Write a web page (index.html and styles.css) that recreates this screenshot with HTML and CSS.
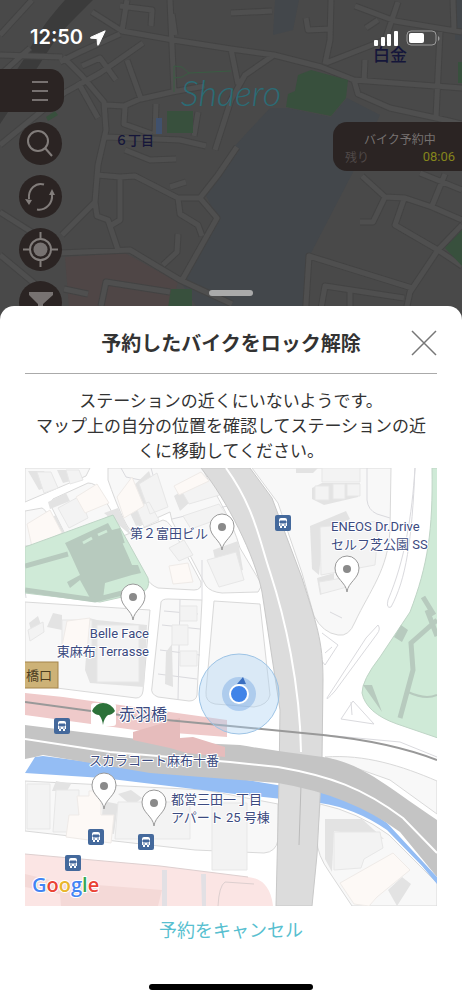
FILE: index.html
```html
<!DOCTYPE html>
<html lang="ja">
<head>
    <meta charset="UTF-8">
    <meta name="viewport" content="width=device-width, initial-scale=1.0">
    <title>予約したバイクをロック解除</title>
    <link rel="stylesheet" href="styles.css">
</head>
<body>

<div class="screen">
    <div class="backdrop">
        <!-- Dimmed map behind the sheet -->
        <svg class="backdrop-map" viewBox="0 0 462 320" preserveAspectRatio="xMidYMin slice" aria-hidden="true">
            <rect width="462" height="320" fill="#494949"/>
            <path class="dim-water" d="M270 108L288 108 331 117 347 98 380 115 352 174 310 255 302 320H205L182 284 218 219 204 192 231 150Z"/>
            <path class="dim-water" d="M275 0h24l-6 30-20 5zM455 0h7v40h-7z"/>
            <path fill="#4f4646" d="M65 257L125 253 178 282 166 320H70Z"/>
            <path fill="#3b3b3b" d="M65 0H93C75 18 61 31 52 45L28 82 0 124V95L26 56C38 32 49 18 65 0Z"/>
            <g class="dim-edges">
                <path id="lanes" d="M127 0L122 31 173 40 231 49 274 55 321 67 354 80 462 88M170 0L174 92M172 14L175 35M122 31L92 12M120 6L152 10 151 26M143 43L100 73 64 93 0 145M60 62L80 52 120 34M63 57L82 76 104 102 106 130 98 165 95 202 62 235M82 66L100 58 116 80M78 82L98 118M127 60L141 99 172 92 205 86M106 105L124 106 140 99M125 107L124 124 152 134M156 104L155 134M106 137L180 140 206 146M194 136L198 112M274 55L245 75 231 100 215 150M231 49L238 84M331 0L330 40 325 64M231 13L272 11M306 18L308 30 330 29M326 63L385 40 398 2M355 6L395 21 462 32M366 28L378 20M453 0L454 30M440 32L436 118M365 60L364 82M354 80L358 94 390 108 436 118 462 124M0 212L60 250M0 255L35 284M60 253L130 250 180 280 232 304M97 175L120 177 135 176 178 198 200 198 217 218 181 282M120 177L120 220 110 226M95 202L97 216 108 220 118 250M178 198L180 214 198 225 202 236M178 234L177 252 163 265M200 198L218 175 237 147M125 150L150 160 176 159M170 187L186 182M362 176L385 197 373 222 360 222M385 197L405 198 432 207 462 220M404 199L395 225 438 250 462 266M445 174L432 206M420 173L462 190M462 225L438 250 410 292 404 320M305 320L309 256 412 288M319 320L325 286 404 298M350 290L350 306M0 55L62 57M0 35L32 0M0 75L30 48M64 289L88 294M101 306L106 282 170 292"/>
            </g>
            <use class="dim-roads" href="#lanes"/>
            <path class="dim-green" d="M298 75L311 70 348 80 346 98 331 116 286 107 288 94 295 91ZM167 111h26v22h-26zM171 289h21v31h-26zM462 230L445 248 462 266zM458 62h4v21h-4zM46 117l9-6 3 4-10 6z"/>
            <path fill="#40516d" d="M156 118h6v16h-6z"/>
            <path d="M174 92V66l8 1 7 6 42-2M174 78l8-1 7-4" fill="none" stroke="#3a5c43"/>
            <g class="dim-labels">
                <text x="115" y="145" font-size="13">６丁目</text>
                <text x="373" y="61" font-size="17">白金</text>
            </g>
        </svg>

        <div class="status-bar">
            <div class="status-group">
                <time class="clock">12:50</time>
                <svg width="16" height="16" viewBox="0 0 16 16" aria-hidden="true"><path d="M15.2.8L.8 7.2c-.7.4-.5 1 .3 1l6 .4.4 6c0 .8.7 1 1 .3z" fill="#fff" stroke="#fff" stroke-linejoin="round"/></svg>
            </div>
            <div class="status-group">
                <svg width="25" height="16" viewBox="0 0 25 16" fill="#fff" aria-hidden="true"><rect y="10" width="4" height="6" rx="1"/><rect x="7" y="7" width="4" height="9" rx="1"/><rect x="13" y="4" width="4" height="12" rx="1"/><rect x="20" y="1" width="4" height="15" rx="1"/></svg>
                <svg width="34" height="16" viewBox="0 0 34 16" aria-hidden="true"><rect x="1" y="1" width="29" height="14" rx="4" fill="none" stroke="#9a9a9a"/><rect x="3" y="3" width="15" height="10" rx="2" fill="#fff"/><path d="M32 6c2 1 2 4 0 5z" fill="#9a9a9a"/></svg>
            </div>
        </div>

        <div class="brand">Shaero</div>

        <div class="map-controls">
            <button class="menu-button" aria-label="メニュー">
                <svg width="16" height="22" viewBox="0 0 16 22" stroke="#777170" stroke-width="2"><path d="M0 2h16M0 11h16M0 20h16"/></svg>
            </button>
            <button class="round-button" aria-label="検索">
                <svg viewBox="0 0 43 43"><circle cx="19" cy="19" r="10"/><path d="M26 26l7 8"/></svg>
            </button>
            <button class="round-button" aria-label="更新">
                <svg viewBox="0 0 43 43"><path d="M25 9.500C17 7 9 14 10 24M18 34.500C27 36 34 28 33 19"/><path d="M6 24l7 1-3 5zM30 20l3-6 3 6z" fill="#827d7b" stroke="none"/></svg>
            </button>
            <button class="round-button" aria-label="現在地">
                <svg viewBox="0 0 43 43"><circle cx="21.500" cy="21.500" r="10.500"/><circle cx="21.500" cy="21.500" r="7" fill="#777271" stroke="none"/><path d="M21.500 4v7M21.500 32v7M4 21.500h7M32 21.500h7"/></svg>
            </button>
            <button class="round-button" aria-label="絞り込み">
                <svg viewBox="0 0 43 43"><path d="M10 11h24v3L24 23v10l-5-3v-7L10 14z" fill="#777271" stroke="none"/></svg>
            </button>
        </div>

        <div class="reservation">
            <div class="reservation-title">バイク予約中</div>
            <div class="reservation-row"><span>残り</span><span class="countdown">08:06</span></div>
        </div>
        <div class="drag-handle"></div>
    </div>

    <main class="sheet">
        <header class="sheet-header">
            <h1>予約したバイクをロック解除</h1>
            <button class="close-button" aria-label="閉じる">
                <svg width="26" height="26" viewBox="0 0 26 26" stroke="#777" stroke-width="1.500"><path d="M1 1l24 24M25 1L1 25"/></svg>
            </button>
        </header>

        <p class="message">ステーションの近くにいないようです。<br>マップ上の自分の位置を確認してステーションの近くに移動してください。</p>

        <svg class="map" viewBox="25 468 412 438" role="img" aria-label="現在地周辺のマップ">
            <defs>
                <g id="pin">
                    <path d="M0 23C-1 13-12 10-12-1A12 12 0 0 1 12-1C12 10 1 13 0 23Z" fill="#fff" stroke="#999"/>
                    <circle r="4" fill="#8a8a8a"/>
                </g>
                <g id="bus">
                    <rect x="-8" y="-8" width="16" height="16" rx="2" fill="#44699c"/>
                    <path d="M-4-3q0-2 2-2h4q2 0 2 2v6h-1v2h-2v-2h-2v2h-2v-2h-1z" fill="#fff"/>
                    <path d="M-3-2h6v2h-6zM-3 2h2M1 2h2" fill="#44699c" stroke="#44699c"/>
                </g>
            </defs>
            <rect x="25" y="468" width="412" height="438" fill="#fff"/>

            <!-- City blocks -->
            <g class="blocks">
                <path d="M25 468H90L86 476 25 502ZM25 511L42 508Q48 511 66 541L25 546ZM53 499L88 483Q96 483 100 491L113 514 67 538 50 504ZM108 468H202C218 499 232 520 240 548L262 585 258 592 222 593Q211 592 206 586L172 521 170 512 130 530Q122 520 108 480ZM123 536L163 520Q167 520 171 526L201 582Q202 590 194 590L158 588Q150 585 146 577Z"/>
                <path d="M25 602L150 610 143 691Q142 698 136 698L25 684ZM161 602Q162 599 168 599L202 600 197 695Q196 701 189 701L158 697Q150 694 152 687ZM214 601L260 604 270 695Q268 705 254 707L215 704Q205 702 206 692Z"/>
                <path d="M252 468H391L390 530C388 570 370 590 355 622Q349 637 338 635 323 633 314 616L302 573 278 503ZM25 781L205 790 278 804V840Q276 852 264 853L195 850 25 831ZM320 804Q358 812 389 835L437 883V906H352L330 873Q317 855 317 840ZM325 757C365 754 402 766 437 781V814L390 780Z"/>
            </g>
            <g class="outlines">
                <path d="M367 468V500Q368 510 377 514L390 518M415 468C412 515 405 560 388 600Q386 609 391 607C406 580 412 540 415 468M378 625Q381 629 377 634L335 691Q326 701 327 698L366 638Z"/>
                <path d="M322 633L338 645 325 665 318 656M325 653L332 647M353 701L374 724 341 719ZM351 702L352 715M330 612L342 618M202 600V560M180 599L178 700M162 625L200 629M160 650L200 655M164 611L198 614M158 674L197 679"/>
                <path d="M121 468L126 477 145 481M151 468L162 507M172 519L240 503M25 590L26 598M325 735L400 742 437 757"/>
            </g>

            <!-- Buildings -->
            <g class="shade">
                <path d="M28 471h16l8 14-13 5zM57 470h13l5 10-12 3zM48 502l18-9 4 8-20 8zM104 513L118 508 132 536zM130 513l16-6 8 14-18 5zM174 496l18-12 8 9-20 18zM213 550l25-9 5 29-24 8zM130 489l19-18 10 31-17 6zM46 520l10-5 9 20-8 4z"/>
                <path d="M53 613L47 627 62 630V615zM89 618L85 670 90 683 144 687 147 625 97 620zM29 623l9-7 4 12-9 9zM166 652l6-8 1 43-8-3zM296 468h22l-5 5h-17zM312 488l10-5h38l-2 14-34 8-12-6zM310 526l36-15 4 8-27 14-4 42-7-6zM317 578l17-5v14l-14 8z"/>
                <path d="M56 781l15 3-4 7h-15zM118 794l13-4 11 8-10 8zM103 801l15 3-4 30-13-2zM325 819h37l22 20-50-8-2 41-7-13zM388 890l14-13 9 7-14 22z"/>
            </g>
            <g class="roofs">
                <path d="M37 472h14l7 16-14 5zM66 470h13l4 10-13 4zM58 508l22-12 8 22-19 10zM136 507l13-5 10 18-15 7zM182 492l32-14 9 16-34 10zM139 484l18-11 11 34-18 7zM183 516l36-12 8 12-36 13zM207 560l29-8 8 28-25 7zM169 548l15-8 9 15-14 6z"/>
                <path d="M62 620h30v36H62zM97 625h42v57H97zM172 625h16v20h-16zM180 606h17v15h-17zM180 651h17v15h-17zM28 630l15-8 1 10-14 9zM322 468h38v14h-38zM315 486h14v14h-14zM333 484h12v15h-12zM347 484h13v12h-13zM320 527l59-6-4 44-54 10zM319 582l29-5-1 10-26 7z"/>
                <path d="M27 784h23v45H27zM56 790h23v42H53zM118 802h72v37h-75zM212 803h35v67h-35zM334 832h46l3 16-19 11-3 9-27 2z"/>
            </g>
            <g class="warm-roofs">
                <path d="M27 524l23-14 12 23-30 14zM76 497l21-13 12 19-24 10zM117 497l15-20 12 29-20 12zM174 486l27-14 8 9-30 14zM169 566l19-3 5 19-20 2zM67 621l23-3-3 34-26-1zM77 796h12v-5h12v24h13l-3 28-45-6 3-22h10zM340 883l53-30 17 17-33 27-8 9-15-2z"/>
            </g>
            <path d="M25 854L160 866 248 877Q270 879 273 906H25Z" fill="#fbe5e4"/>
            <path d="M25 854L160 866 248 877M254 884L225 882Q219 886 218 906" fill="none" stroke="#ddcfcf"/>
            <path d="M25 874L58 882 162 890 158 906H61L60 894 25 887Z" fill="#f4d9d7"/>
            <path d="M162 870h5v36h-5zM201 874h5v32h-4z" fill="#e2e0e4"/>

            <!-- Parks -->
            <g fill="#cfead7" stroke="#bfd5c6">
                <path d="M25 547L113 515 148 578Q151 590 140 593L100 602 25 593Z"/>
                <path d="M432 468C433 530 428 565 410 612L380 657Q362 680 362 693 366 713 397 724L438 738V468Z"/>
            </g>
            <g fill="#b7cabe">
                <path d="M65 543L108 523 112 530 120 528 132 565 138 565 141 573 132 575 105 583 103 599 90 598 80 580 70 588 67 582 80 575 70 553ZM363 685H372L382 712ZM401 625L408 630 402 642 394 637Z"/>
                <path d="M25 566L68 554M25 590L95 600 138 589M437 620L411 643 413 670 400 718M427 610L437 636M423 597L434 615" fill="none" stroke="#b7cabe" stroke-width="5"/>
                <path d="M408 692Q425 700 437 695" fill="none" stroke="#b7cabe" stroke-width="2"/>
            </g>
            <path d="M83 543l9-5M98 535l9-4M124 543l9 20M105 591l12-4M122 583l9-3" stroke="#cfead7" stroke-width="3"/>

            <!-- River, elevated roads and the station -->
            <path fill="#94bdf4" d="M43 756L120 766 235 778 320 792Q360 803 387 823L437 877V884L422 866 387 830Q355 808 320 803L235 794 103 778 25 773 35 757Z"/>
            <path fill="#dcdcdc" stroke="#c8c8c8" d="M201 468H250L272 498 302 578C316 623 323 640 323 680L322 760 317 855 312 906H276L279 780 280 710 262 592C255 556 227 500 201 468Z"/>
            <path d="M226 468C255 508 260 543 270 572 285 618 300 684 301 752" fill="none" stroke="#fff" stroke-width="2"/>
            <path d="M301 785L299 845" stroke="#bbb"/>
            <path fill="#efcaca" d="M25 693L63 697 227 720V737L135 730 25 715Z"/>
            <path fill="#c4c4c4" d="M25 725L153 741 240 745Q280 752 323 757C360 762 385 785 437 820V877L400 832Q350 795 278 783L150 773 43 755 35 757 25 759Z"/>
            <path d="M25 739L110 752 230 762 278 767C330 776 363 788 403 818L437 853" fill="none" stroke="#fff" stroke-width="2"/>
            <path fill="#e6bcbc" d="M133 732L180 718V738L193 737 225 747V757L187 753 170 748 133 740Z"/>
            <path d="M25 702L135 717 230 726 323 735Q390 742 437 760" fill="none" stroke="#999" stroke-width="2"/>
            <rect x="20" y="662" width="38" height="26" fill="#cdb277" stroke="#a4844b"/>

            <!-- Current position -->
            <circle cx="239" cy="694" r="40" fill="#a9d0f3" fill-opacity=".38" stroke="#9cc3e5"/>
            <circle cx="239" cy="694" r="17" fill="#6c9fe0" fill-opacity=".4"/>
            <path d="M237 684L243 677 246 684Z" fill="#3b6fc0"/>
            <circle cx="239" cy="694" r="9" fill="#4184e8" stroke="#fff" stroke-width="2"/>

            <rect x="91" y="703" width="25" height="23" rx="3" fill="#fff"/>
            <path d="M92 711Q96 703 103 703 111 703 115 711 112 715 108 715 104 718 103 725 102 718 99 715 95 715 92 711Z" fill="#2c7139"/>

            <use href="#pin" x="222" y="527"/>
            <use href="#pin" x="133" y="597"/>
            <use href="#pin" x="347" y="569"/>
            <use href="#pin" x="104" y="786"/>
            <use href="#pin" x="154" y="803"/>
            <use href="#bus" x="283" y="523"/>
            <use href="#bus" x="62" y="726"/>
            <use href="#bus" x="96" y="837"/>
            <use href="#bus" x="146" y="842"/>
            <use href="#bus" x="73" y="863"/>

            <g class="map-labels">
                <text x="130" y="538">第２富田ビル</text>
                <text x="331" y="531">ENEOS Dr.Drive</text>
                <text x="331" y="549">セルフ芝公園 SS</text>
                <text x="149" y="638" text-anchor="end">Belle Face</text>
                <text x="149" y="656" text-anchor="end">東麻布 Terrasse</text>
                <text x="119" y="720" class="station">赤羽橋</text>
                <text x="89" y="765">スカラコート麻布十番</text>
                <text x="171" y="804">都営三田一丁目</text>
                <text x="171" y="822">アパート 25 号棟</text>
                <text x="26" y="680" class="exit">橋口</text>
            </g>
            <text x="32" y="892" class="google"><tspan fill="#4285f4">G</tspan><tspan fill="#ea4335">o</tspan><tspan fill="#e9b62c">o</tspan><tspan fill="#4285f4">g</tspan><tspan fill="#34a853">l</tspan><tspan fill="#ea4335">e</tspan></text>
        </svg>

        <button class="cancel-button">予約をキャンセル</button>
        <div class="home-indicator"></div>
    </main>
</div>

</body>
</html>
```
FILE: styles.css
```css
:root {
    --text-color: #333;
    --link-color: #58bfd0;
    --control-bg: #2b2423;
    --control-line: #827d7b;
    --label-color: #3b4a80;
    --font-family: "Noto Sans CJK JP", "Noto Sans", sans-serif;
}

* {
    box-sizing: border-box;
}

body {
    margin: 0;
    font-family: var(--font-family);
    color: var(--text-color);
    background: #fff;
}

button {
    font-family: inherit;
    border: 0;
    padding: 0;
    background: none;
    cursor: pointer;
}

svg {
    display: block;
}

.screen {
    min-height: 100vh;
    display: flex;
    flex-direction: column;
}

/* Dimmed area above the sheet */
.backdrop {
    position: relative;
    height: 320px;
    flex: none;
    overflow: hidden;
    background: #494949;
}

.backdrop-map {
    position: absolute;
    inset: 0;
    width: 100%;
    height: 100%;
}

.dim-water { fill: #43474b; }
.dim-green { fill: #38503d; }

.dim-edges {
    fill: none;
    stroke: #434343;
    stroke-width: 7;
    stroke-linejoin: round;
}

.dim-roads {
    fill: none;
    stroke: #4f4f4f;
    stroke-width: 5;
    stroke-linejoin: round;
}

.dim-edges path {
    stroke: inherit;
    stroke-width: inherit;
}

.dim-labels {
    fill: #15163a;
    font-weight: 500;
}

.status-bar {
    position: relative;
    display: flex;
    justify-content: space-between;
    align-items: center;
    padding: 25px 22px 0 30px;
}

.status-group {
    display: flex;
    align-items: center;
    gap: 7px;
}

.clock {
    font: 600 20px/25px Inter, sans-serif;
    color: #fff;
}

.brand {
    position: absolute;
    top: 70px;
    left: 0;
    right: 0;
    text-align: center;
    font: italic 300 36px/44px Lato, sans-serif;
    color: #2b6c76;
}

.map-controls {
    position: relative;
    margin-top: 19px;
    display: flex;
    flex-direction: column;
    gap: 10px;
}

.menu-button {
    width: 64px;
    height: 43px;
    padding-left: 32px;
    background: var(--control-bg);
    border-radius: 0 14px 14px 0;
}

.round-button {
    width: 43px;
    height: 43px;
    margin-left: 19px;
    background: var(--control-bg);
    border-radius: 50%;
}

.round-button svg {
    fill: none;
    stroke: var(--control-line);
    stroke-width: 2;
}

.reservation {
    position: absolute;
    top: 122px;
    right: 0;
    width: 129px;
    padding: 8px 7px 5px 12px;
    background: var(--control-bg);
    border-radius: 14px 0 0 14px;
    font-size: 12px;
    line-height: 18px;
    color: #777271;
}

.reservation-title {
    text-align: center;
}

.reservation-row {
    display: flex;
    justify-content: space-between;
    color: #504948;
}

.countdown {
    font-family: Roboto, sans-serif;
    font-size: 13px;
    color: #85851c;
}

.drag-handle {
    position: absolute;
    bottom: 24px;
    left: 50%;
    width: 44px;
    height: 6px;
    margin-left: -22px;
    border-radius: 3px;
    background: #aaa;
}

/* Bottom sheet */
.sheet {
    position: relative;
    flex: 1;
    margin-top: -14px;
    padding: 0 25px 10px;
    display: flex;
    flex-direction: column;
    background: #fff;
    border-radius: 14px 14px 0 0;
}

.sheet-header {
    display: grid;
    grid-template-columns: 26px 1fr 26px;
    align-items: center;
    padding: 20px 0 13px;
    border-bottom: 1px solid #aaa;
}

.sheet-header h1 {
    grid-column: 2;
    margin: 0;
    text-align: center;
    font-size: 20px;
    line-height: 34px;
    font-weight: 700;
}

.message {
    margin: 0;
    padding: 13px 8px 6px;
    text-align: center;
    font-size: 17px;
    line-height: 25px;
}

.map {
    width: 100%;
    height: auto;
}

.blocks {
    fill: #f8f8f8;
    stroke: #d9d9d9;
}

.outlines {
    fill: none;
    stroke: #dadade;
}

.shade { fill: #e3e3e3; }

.roofs {
    fill: #f3f3f3;
    stroke: #e7e7e7;
}

.warm-roofs {
    fill: #fdf9f6;
    stroke: #efebe8;
}

.map-labels {
    font-family: Roboto, "Noto Sans CJK JP", sans-serif;
    font-size: 13px;
    fill: var(--label-color);
    stroke: #fff;
    stroke-width: 2;
    stroke-linejoin: round;
    paint-order: stroke;
}

.map-labels .station {
    font-size: 16px;
}

.map-labels .exit {
    fill: #4b3c1f;
    stroke: none;
}

.google {
    font-family: "Open Sans", sans-serif;
    font-size: 20px;
    font-weight: 600;
    stroke: #fff;
    stroke-width: 2;
    paint-order: stroke;
}

.cancel-button {
    align-self: center;
    margin-top: 10px;
    font-size: 18px;
    line-height: 26px;
    color: var(--link-color);
}

.home-indicator {
    align-self: center;
    width: 40%;
    height: 6px;
    margin-top: auto;
    border-radius: 3px;
    background: #000;
}
```
